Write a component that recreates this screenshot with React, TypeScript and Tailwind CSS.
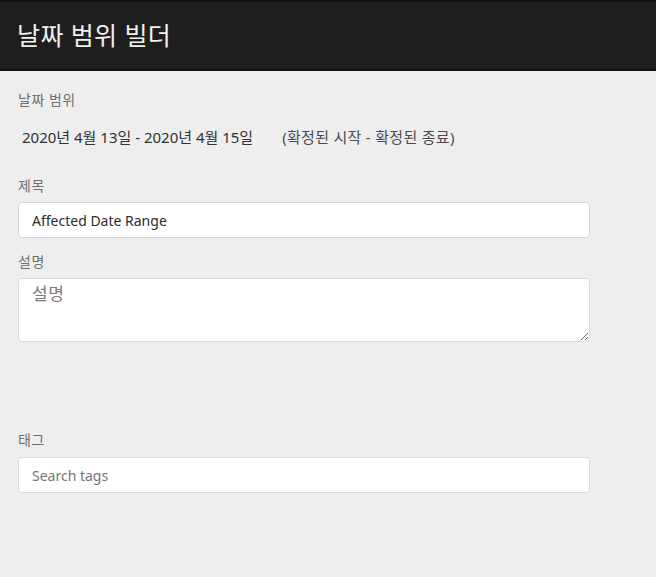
const FONT = "font-['Noto_Sans','Noto_Sans_CJK_KR',sans-serif]";

const FieldLabel = ({ children }: { readonly children: string }) => (
  <div className="text-[14px] leading-4 tracking-[0.5px] text-[#6e6e6e]">{children}</div>
);

export default function App() {
  return (
    <div className={`${FONT} flex h-[577px] w-[656px] flex-col bg-[#eeeeee]`}>
      <header className="flex h-[71px] items-center border-t-2 border-b-2 border-t-[#0d0d0d] border-b-[#111] bg-[#1e1e1e] px-[17px]">
        <h1 className="text-[25px] font-normal tracking-[0.4px] text-[#f0f0f0]">날짜 범위 빌더</h1>
      </header>

      <div className="flex w-[608px] flex-col px-[18px] pt-[21px]">
        <FieldLabel>날짜 범위</FieldLabel>
        <div className="mt-[19px] flex items-center text-[15px] leading-5 text-[#323232]">
          <span className="pl-[4px]">2020년 4월 13일 - 2020년 4월 15일</span>
          <span className="ml-[29px] text-[15px] tracking-[0.3px] text-[#4b4b4b]">(확정된 시작 - 확정된 종료)</span>
        </div>

        <div className="mt-[31px]">
          <FieldLabel>제목</FieldLabel>
        </div>
        <input
          className="mt-[8px] h-[36px] w-full rounded-[4px] border border-[#d6d6d6] bg-white px-[13px] text-[14px] text-[#2c2c2c] outline-none"
          defaultValue="Affected Date Range"
        />

        <div className="mt-[16px]">
          <FieldLabel>설명</FieldLabel>
        </div>
        <textarea
          className="mt-[8px] h-[64px] w-full resize-y rounded-[4px] border border-[#dadada] bg-white px-[13px] py-[3px] text-[17px] leading-6 tracking-[0.5px] text-[#323232] outline-none placeholder:text-[#7a7a7a]"
          placeholder="설명"
        />

        <div className="mt-[90px]">
          <FieldLabel>태그</FieldLabel>
        </div>
        <input
          className="mt-[9px] h-[36px] w-full rounded-[4px] border border-[#dadada] bg-white px-[13px] text-[14px] outline-none placeholder:text-[#757575]"
          placeholder="Search tags"
        />
      </div>
    </div>
  );
}
